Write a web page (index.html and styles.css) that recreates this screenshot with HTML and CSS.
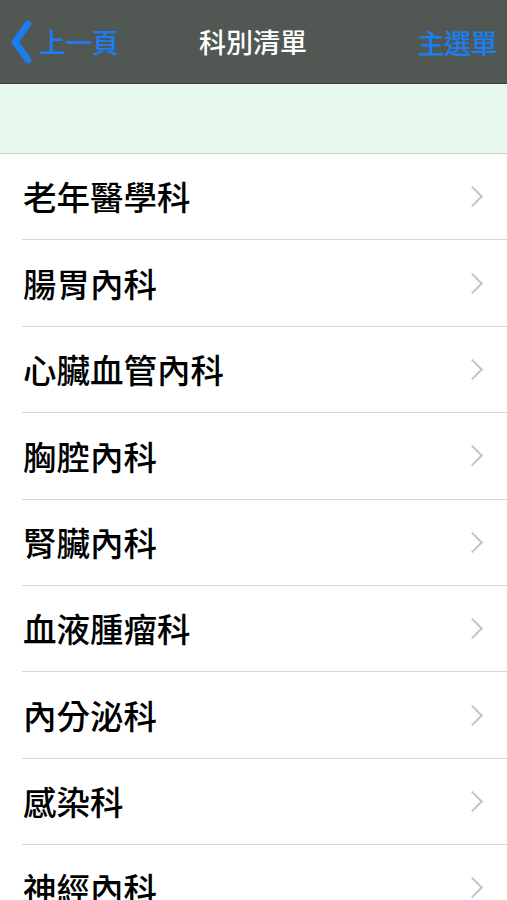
FILE: index.html
```html
<!DOCTYPE html>
<html lang="zh-Hant">
<head>
<meta charset="utf-8">
<title>科別清單</title>
<link rel="stylesheet" href="styles.css">
</head>
<body>
<header class="navbar">
  <a class="nav-back">
    <svg class="back-chevron" width="24" height="44" viewBox="0 0 24 44"><path d="M19 4 L6 22 L19 40" fill="none" stroke="#1a7ef2" stroke-width="6.5" stroke-linecap="round" stroke-linejoin="round"/></svg>
    <span>上一頁</span>
  </a>
  <h1 class="nav-title">科別清單</h1>
  <a class="nav-menu">主選單</a>
</header>
<div class="band"></div>
<ul class="list">
  <li class="row"><span class="label">老年醫學科</span><span class="chev"></span></li>
  <li class="row"><span class="label">腸胃內科</span><span class="chev"></span></li>
  <li class="row"><span class="label">心臟血管內科</span><span class="chev"></span></li>
  <li class="row"><span class="label">胸腔內科</span><span class="chev"></span></li>
  <li class="row"><span class="label">腎臟內科</span><span class="chev"></span></li>
  <li class="row"><span class="label">血液腫瘤科</span><span class="chev"></span></li>
  <li class="row"><span class="label">內分泌科</span><span class="chev"></span></li>
  <li class="row"><span class="label">感染科</span><span class="chev"></span></li>
  <li class="row"><span class="label">神經內科</span><span class="chev"></span></li>
</ul>
</body>
</html>
```
FILE: styles.css
```css
html, body {
  margin: 0;
  padding: 0;
  background: #ffffff;
  overflow: hidden;
}
body {
  font-family: "Noto Sans CJK TC", "Noto Sans", sans-serif;
  width: 507px;
  height: 900px;
}
.navbar {
  height: 83px;
  background: #515853;
  border-bottom: 1px solid #3c413d;
  display: flex;
  align-items: center;
  justify-content: space-between;
  padding: 0 10px 0 9px;
  box-sizing: content-box;
  position: relative;
}
.nav-back {
  display: flex;
  align-items: center;
  gap: 6px;
  color: #1a7ef2;
  font-size: 27px;
  font-weight: 500;
  letter-spacing: -0.5px;
}
.back-chevron {
  display: block;
}
.nav-title {
  margin: 0;
  font-size: 27px;
  font-weight: 500;
  color: #ffffff;
  position: absolute;
  left: 199px;
  top: 50%;
  transform: translateY(-52%);
}
.nav-menu {
  color: #1a7ef2;
  font-size: 27px;
  font-weight: 500;
  letter-spacing: -0.5px;
  margin-top: 1px;
}
.band {
  height: 69px;
  background: #e7f8ec;
  border-bottom: 1px solid #cfd3d0;
}
.list {
  list-style: none;
  margin: 0;
  padding: 0 0 0 22px;
}
.row {
  height: 86.4px;
  box-sizing: border-box;
  border-bottom: 1px solid #d6d6d6;
  display: flex;
  align-items: center;
  justify-content: space-between;
  padding: 0 24px 0 1px;
}
.label {
  font-size: 33.5px;
  font-weight: 500;
  color: #000000;
  line-height: 1;
  margin-top: -1px;
}
.chev {
  width: 13px;
  height: 13px;
  border-top: 2.5px solid #c4c4c8;
  border-right: 2.5px solid #c4c4c8;
  transform: rotate(45deg);
  margin-right: 3px;
}
```
